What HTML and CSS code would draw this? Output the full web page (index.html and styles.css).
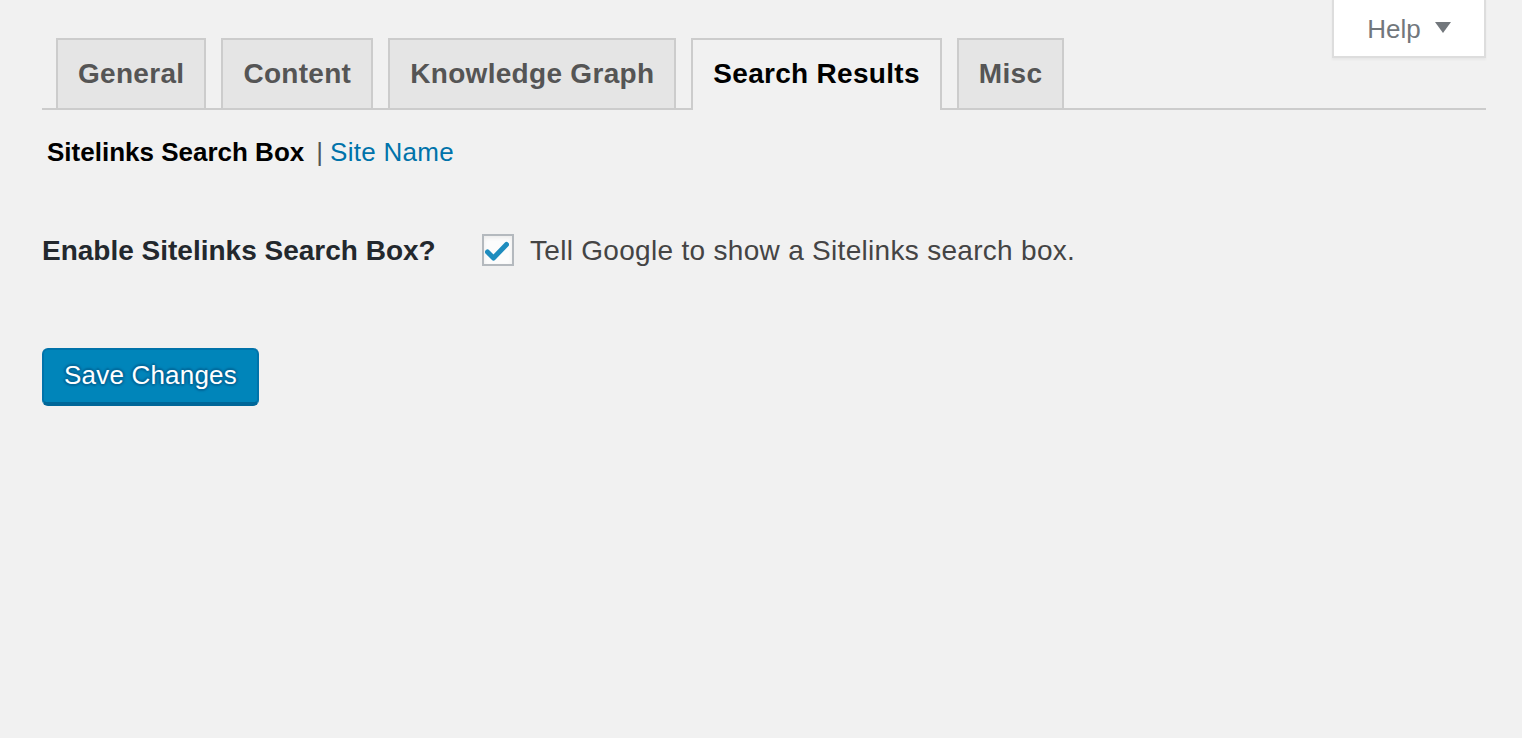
FILE: index.html
```html
<!DOCTYPE html>
<html lang="en">
<head>
<meta charset="utf-8">
<title>Search Appearance</title>
<link rel="stylesheet" href="styles.css">
</head>
<body>
<div class="page">
  <div class="help-tab">
    <span>Help</span>
    <svg class="caret" width="16" height="12" viewBox="0 0 16 12"><path d="M0 0H16L8 11Z" fill="#72777c"/></svg>
  </div>
  <nav class="tabs">
    <a class="tab">General</a>
    <a class="tab">Content</a>
    <a class="tab">Knowledge Graph</a>
    <a class="tab active">Search Results</a>
    <a class="tab">Misc</a>
  </nav>
  <ul class="subsub">
    <li class="current">Sitelinks Search Box</li>
    <li class="sep">|</li>
    <li><a class="link">Site Name</a></li>
  </ul>
  <div class="field">
    <label class="field-label">Enable Sitelinks Search Box?</label>
    <div class="field-control">
      <span class="checkbox">
        <svg width="24" height="20" viewBox="0 0 24 20"><path d="M2.5 11L8.5 17L21.5 3.5" fill="none" stroke="#1e8cbe" stroke-width="5" stroke-linecap="round" stroke-linejoin="round"/></svg>
      </span>
      <span class="control-text">Tell Google to show a Sitelinks search box.</span>
    </div>
  </div>
  <div class="actions">
    <button class="btn-primary">Save Changes</button>
  </div>
</div>
</body>
</html>
```
FILE: styles.css
```css
* { box-sizing: border-box; }
html, body {
  margin: 0;
  padding: 0;
  background: #f1f1f1;
  font-family: "Liberation Sans", Arial, sans-serif;
}
.page {
  position: relative;
  padding: 38px 36px 0 42px;
  min-height: 738px;
}
.help-tab {
  position: absolute;
  top: -2px;
  right: 36px;
  width: 154px;
  height: 60px;
  background: #fff;
  border: 2px solid #ddd;
  border-top: none;
  box-shadow: 0 2px 2px rgba(0,0,0,0.04);
  display: flex;
  align-items: center;
  justify-content: center;
  gap: 14px;
  color: #72777c;
  font-size: 26px;
  padding-top: 4px;
}
.help-tab .caret { margin-top: -2px; }
.tabs {
  display: flex;
  align-items: flex-end;
  border-bottom: 2px solid #ccc;
  height: 72px;
  padding-left: 0;
}
.tab {
  margin-left: 14px;
  border: 2px solid #ccc;
  border-bottom: none;
  background: #e5e5e5;
  padding: 10px 20px;
  font-size: 28px;
  line-height: 48px;
  font-weight: 700;
  letter-spacing: 0.3px;
  color: #555;
  white-space: nowrap;
}
.tab + .tab { margin-left: 15px; }
.tab.active {
  background: #f1f1f1;
  color: #000;
  margin-bottom: -2px;
  padding-bottom: 12px;
}
.subsub {
  list-style: none;
  margin: 0;
  padding: 26px 0 0 5px;
  display: flex;
  align-items: center;
  font-size: 26px;
  line-height: 32px;
}
.subsub .current { font-weight: 700; color: #000; }
.subsub .sep { color: #555; margin: 0 7px 0 12px; }
.subsub .link { color: #0073aa; letter-spacing: 0.3px; }
.field {
  display: flex;
  align-items: center;
  margin-top: 65px;
  height: 36px;
}
.field-label {
  width: 440px;
  font-size: 28px;
  font-weight: 700;
  color: #23282d;
}
.field-control {
  display: flex;
  align-items: center;
  gap: 16px;
}
.checkbox {
  width: 32px;
  height: 32px;
  border: 2px solid #b4b9be;
  background: #fcfcfc;
  display: flex;
  align-items: center;
  justify-content: center;
  box-shadow: inset 0 2px 4px rgba(0,0,0,0.07);
  margin-top: -2px;
}
.checkbox svg { margin: 2px 2px 0 0; }
.control-text {
  font-size: 28px;
  color: #444;
  letter-spacing: 0.3px;
}
.actions { margin-top: 79px; }
.btn-primary {
  height: 58px;
  padding: 0 20px 2px;
  background: #0085ba;
  border: 2px solid #0073aa;
  border-bottom-width: 4px;
  border-bottom-color: #006799;
  border-radius: 6px;
  color: #fff;
  font-family: inherit;
  font-size: 26px;
  letter-spacing: 0.2px;
  text-shadow: 0 -2px 2px #006799, 2px 0 2px #006799, 0 2px 2px #006799, -2px 0 2px #006799;
}
```
